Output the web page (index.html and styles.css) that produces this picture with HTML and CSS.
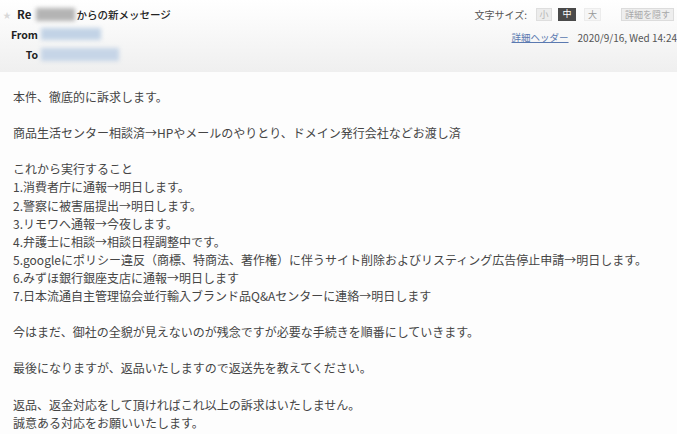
FILE: index.html
```html
<!DOCTYPE html>
<html lang="ja">
<head>
<meta charset="utf-8">
<title>メッセージ</title>
<link rel="stylesheet" href="styles.css">
</head>
<body>
<div class="header">
  <div class="meta">
    <div class="title-row">
      <span class="star">★</span>
      <span class="title-re">Re</span>
      <span class="blur blur-name"></span>
      <span class="title">からの新メッセージ</span>
    </div>
    <div class="addr-row">
      <span class="label">From</span>
      <span class="blur blur-from"></span>
    </div>
    <div class="addr-row">
      <span class="label">To</span>
      <span class="blur blur-to"></span>
    </div>
  </div>
  <div class="tools">
    <div class="tool-row">
      <span class="size-label">文字サイズ:</span>
      <span class="btn btn-s">小</span>
      <span class="btn btn-on">中</span>
      <span class="btn btn-l">大</span>
      <span class="btn btn-hide">詳細を隠す</span>
    </div>
    <div class="date-row">
      <a class="detail-link" href="#">詳細ヘッダー</a>
      <span class="date">2020/9/16, Wed 14:24</span>
    </div>
  </div>
</div>
<div class="content">
  <p>本件、徹底的に訴求します。</p>
  <p>商品生活センター相談済→HPやメールのやりとり、ドメイン発行会社などお渡し済</p>
  <p>これから実行すること<br>
  1.消費者庁に通報→明日します。<br>
  2.警察に被害届提出→明日します。<br>
  3.リモワへ通報→今夜します。<br>
  4.弁護士に相談→相談日程調整中です。<br>
  5.googleにポリシー違反（商標、特商法、著作権）に伴うサイト削除およびリスティング広告停止申請→明日します。<br>
  6.みずほ銀行銀座支店に通報→明日します<br>
  7.日本流通自主管理協会並行輸入ブランド品Q&amp;Aセンターに連絡→明日します</p>
  <p>今はまだ、御社の全貌が見えないのが残念ですが必要な手続きを順番にしていきます。</p>
  <p>最後になりますが、返品いたしますので返送先を教えてください。</p>
  <p>返品、返金対応をして頂ければこれ以上の訴求はいたしません。<br>
  誠意ある対応をお願いいたします。</p>
</div>
</body>
</html>
```
FILE: styles.css
```css
html, body {
  margin: 0;
  padding: 0;
  background: #fdfdfd;
  font-family: "Noto Sans CJK JP", "Noto Sans", sans-serif;
  color: #333;
}
.header {
  height: 72px;
  box-sizing: border-box;
  padding-top: 4px;
  background: linear-gradient(to bottom, #ffffff 0%, #f9f9f9 40%, #efefef 100%);
  display: flex;
  justify-content: space-between;
  overflow: hidden;
}
.meta {
  display: flex;
  flex-direction: column;
}
.title-row {
  height: 20px;
  display: flex;
  align-items: center;
  padding-left: 3px;
}
.star {
  font-size: 8px;
  color: #d8d8d8;
  width: 14px;
}
.title-re {
  font-size: 11.5px;
  font-weight: bold;
  color: #222;
}
.title {
  font-size: 10.5px;
  font-weight: 500;
  color: #222;
}
.blur {
  display: inline-block;
  filter: blur(2px);
}
.blur-name {
  width: 39px;
  height: 13px;
  margin: 0 1px 0 5px;
  background: #b4b4b4;
}
.addr-row {
  height: 20px;
  display: flex;
  align-items: center;
}
.label {
  width: 38px;
  text-align: right;
  font-size: 10.5px;
  font-weight: bold;
  color: #222;
}
.blur-from {
  width: 60px;
  height: 12px;
  margin-left: 3px;
  background: #c2d3e6;
}
.blur-to {
  width: 78px;
  height: 13px;
  margin-left: 3px;
  background: #c6d5e7;
}
.tools {
  display: flex;
  flex-direction: column;
  align-items: flex-end;
  padding-right: 3px;
}
.tool-row {
  height: 20px;
  display: flex;
  align-items: center;
  font-size: 10px;
}
.size-label {
  color: #555;
  margin-right: 9px;
}
.btn {
  display: inline-block;
  height: 13px;
  line-height: 12px;
  font-size: 9px;
  text-align: center;
  box-sizing: border-box;
}
.btn-s {
  width: 16px;
  background: #ececec;
  border: 1px solid #dedede;
  color: #b5b5b5;
  margin-right: 6px;
}
.btn-on {
  width: 18px;
  background: #4a4a4a;
  color: #fff;
  margin-right: 8px;
}
.btn-l {
  width: 17px;
  background: #f6f6f6;
  border: 1px solid #ececec;
  color: #999;
  margin-right: 20px;
}
.btn-hide {
  width: 53px;
  background: #eeeeee;
  border: 1px solid #dcdcdc;
  color: #a8a8a8;
}
.date-row {
  height: 26px;
  display: flex;
  align-items: center;
  font-size: 9.5px;
  margin-right: -3px;
}
.detail-link {
  color: #5a79b0;
  text-decoration: underline;
  margin-right: 9px;
}
.date {
  color: #555;
  font-size: 10px;
}
.content {
  padding: 16px 13px 0;
  font-size: 12px;
  line-height: 18.1px;
  color: #454545;
}
.content p {
  margin: 0 0 18.1px;
}
```
